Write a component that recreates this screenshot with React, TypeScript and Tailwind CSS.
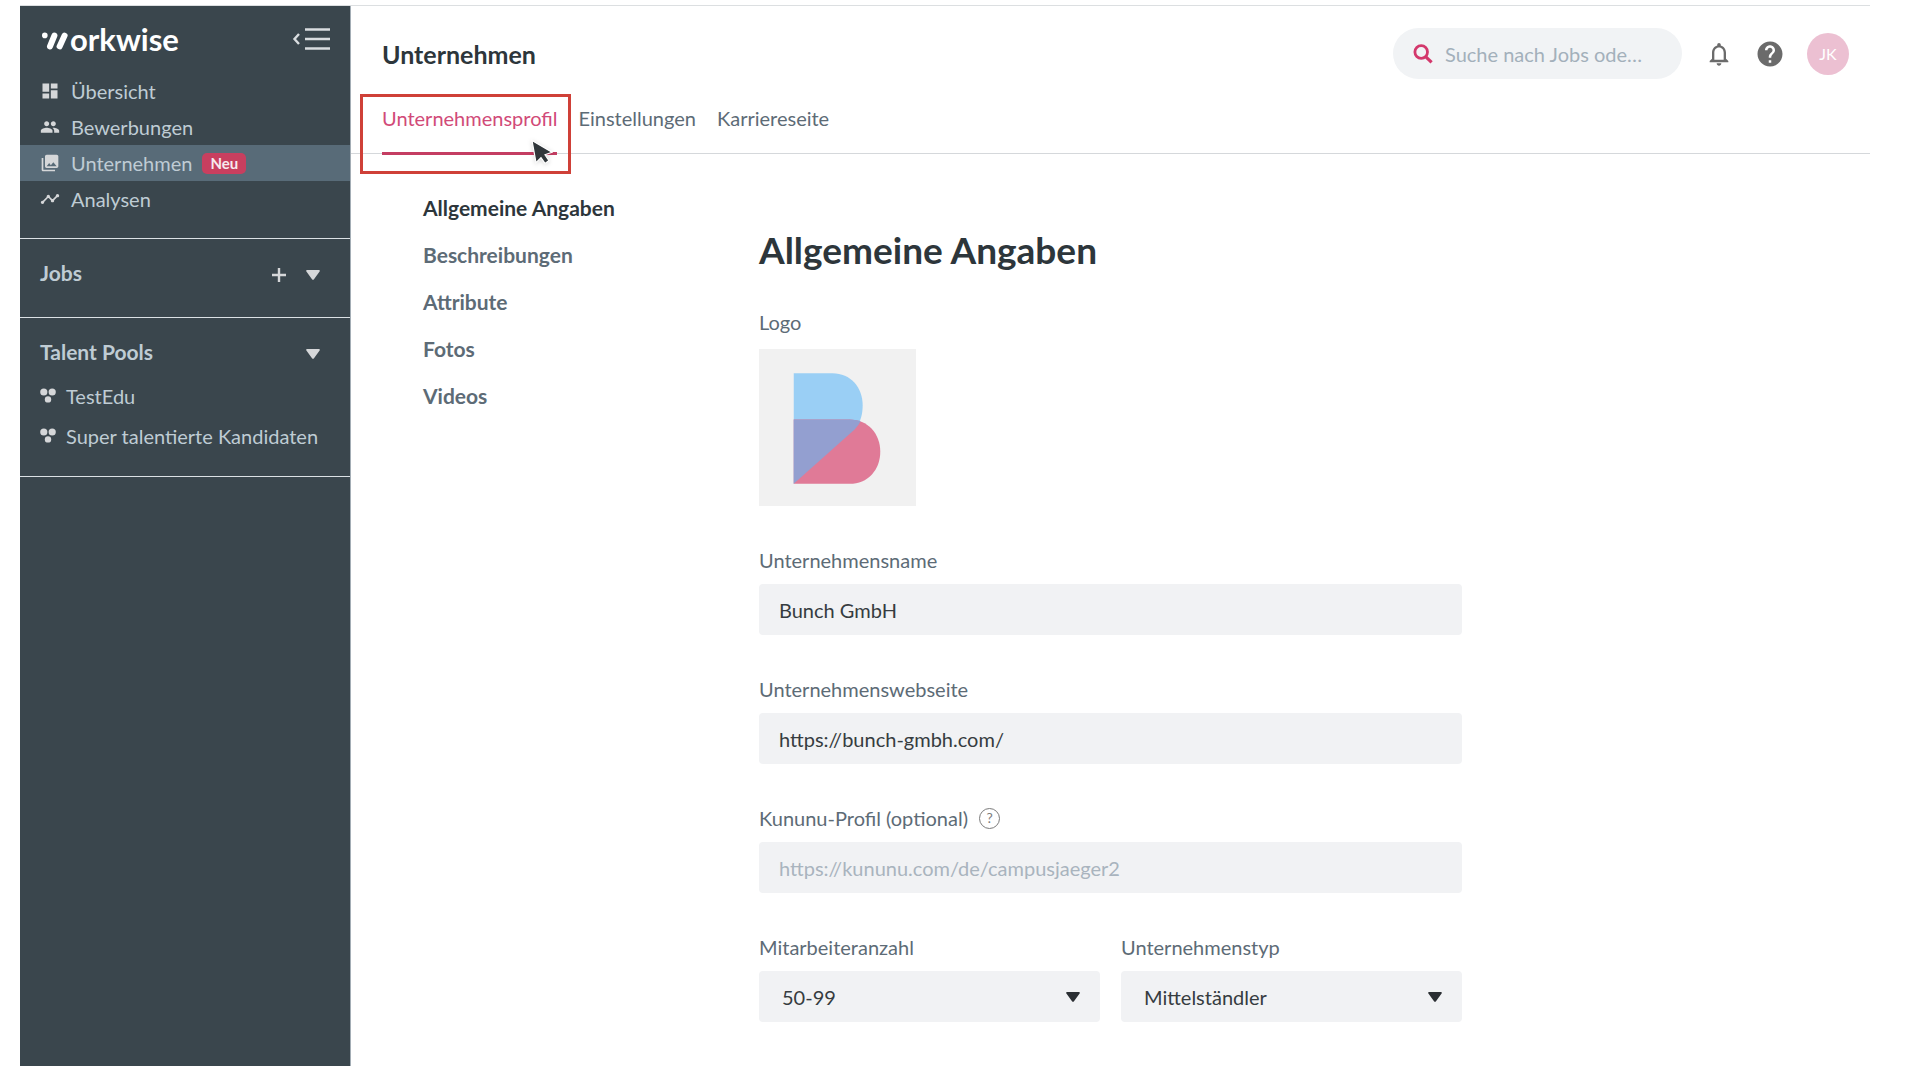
import { ReactNode, useState } from 'react';
import {
  MdDashboard,
  MdHelp,
  MdNotificationsNone,
  MdPeople,
  MdPhotoLibrary,
  MdTimeline,
} from 'react-icons/md';

const navItems = [
  { label: 'Übersicht', icon: MdDashboard },
  { label: 'Bewerbungen', icon: MdPeople },
  { label: 'Unternehmen', icon: MdPhotoLibrary, badge: 'Neu' },
  { label: 'Analysen', icon: MdTimeline },
];

const talentPools = ['TestEdu', 'Super talentierte Kandidaten'];

const tabs = ['Unternehmensprofil', 'Einstellungen', 'Karriereseite'];

const sections = ['Allgemeine Angaben', 'Beschreibungen', 'Attribute', 'Fotos', 'Videos'];

function Caret({ className }: { className?: string }) {
  return (
    <svg viewBox="0 0 14 10" className={`h-[10px] w-[14px] ${className ?? ''}`} fill="currentColor" aria-hidden="true">
      <path d="M1.2 0h11.6c.9 0 1.3.9.8 1.6L8 9.3c-.5.7-1.5.7-2 0L.4 1.6C-.1.9.3 0 1.2 0z" />
    </svg>
  );
}

function PoolIcon() {
  return (
    <svg viewBox="0 0 16 16" className="size-4 shrink-0" fill="#d5d7d9" aria-hidden="true">
      <circle cx="3.8" cy="4" r="3.6" />
      <circle cx="12.2" cy="4" r="3.6" />
      <circle cx="8" cy="11.4" r="3.2" />
    </svg>
  );
}

function Brand() {
  return (
    <a href="#" className="flex items-center text-white" aria-label="workwise">
      <svg viewBox="0 0 28 18" className="mt-1 h-[18px] w-7" aria-hidden="true">
        <circle cx="2.8" cy="3.4" r="2.8" fill="currentColor" />
        <g stroke="currentColor" strokeWidth="6" strokeLinecap="round">
          <path d="M12.4 3.6L8 14.4" />
          <path d="M22.6 3.6L17.6 14.4" />
        </g>
      </svg>
      <span className="text-[31px] leading-9 font-bold">orkwise</span>
    </a>
  );
}

function Sidebar() {
  return (
    <aside className="w-[331px] shrink-0 border-r border-[#a3adb5] bg-[#3a464d] text-xl text-[#bfccd4]">
      <div className="flex items-center justify-between pt-[15px] pr-5 pl-[22px]">
        <Brand />
        <button type="button" aria-label="Menü einklappen">
          <svg viewBox="0 0 38 24" className="h-6 w-[38px]" fill="none" stroke="#d9dde0" aria-hidden="true">
            <path d="M7 7L2.5 12L7 17" strokeWidth="2.4" />
            <path d="M13 2.5h25M13 12h25M13 21.5h25" strokeWidth="2.4" />
          </svg>
        </button>
      </div>

      <nav className="mt-4 border-b border-[#dbe1e5] pb-[21px]">
        {navItems.map(({ label, icon: Icon, badge }) => (
          <a
            key={label}
            href="#"
            className={`flex h-9 items-center pl-5 ${badge ? 'bg-[#586b78]' : ''}`}
          >
            <Icon className="mr-[11px] size-5 text-[#d5d7d9]" />
            {label}
            {badge && (
              <span className="ml-[10px] rounded-[5px] bg-[#c83f5f] px-2 text-[15px] leading-[21px] font-bold text-[#f7e9ed]">
                {badge}
              </span>
            )}
          </a>
        ))}
      </nav>

      <section className="flex h-[79px] items-start justify-between border-b border-[#dbe1e5] pt-5 pr-[30px] pl-5">
        <h2 className="text-[21px] leading-7 font-bold">Jobs</h2>
        <div className="flex h-8 items-center gap-5 text-[#d5d7d9]">
          <button type="button" aria-label="Job hinzufügen">
            <svg viewBox="0 0 14 14" className="size-[14px]" stroke="currentColor" strokeWidth="2.4" aria-hidden="true">
              <path d="M7 0v14M0 7h14" />
            </svg>
          </button>
          <button type="button" aria-label="Jobs anzeigen">
            <Caret />
          </button>
        </div>
      </section>

      <section className="border-b border-[#dbe1e5] pt-5 pb-5 pl-5">
        <div className="flex items-start justify-between pr-[30px]">
          <h2 className="text-[21px] leading-7 font-bold">Talent Pools</h2>
          <button
            type="button"
            aria-label="Talent Pools anzeigen"
            className="flex h-8 items-center text-[#d5d7d9]"
          >
            <Caret />
          </button>
        </div>
        <ul className="mt-[6px]">
          {talentPools.map((pool) => (
            <li key={pool}>
              <a href="#" className="flex h-10 items-center gap-[10px] whitespace-nowrap">
                <PoolIcon />
                {pool}
              </a>
            </li>
          ))}
        </ul>
      </section>
    </aside>
  );
}

function PageHeader() {
  return (
    <header className="border-b border-[#d5d8db] pl-[31px]">
      <div className="flex items-center justify-between pt-[22px] pr-[21px]">
        <h1 className="text-[25px] leading-8 font-bold text-[#2d363b]">Unternehmen</h1>
        <div className="flex items-center">
          <label className="flex h-[51px] w-[289px] items-center gap-3 rounded-full bg-[#f1f3f5] pr-4 pl-5">
            <svg viewBox="0 0 20 20" className="size-5 shrink-0" fill="none" stroke="#d3386c" aria-hidden="true">
              <circle cx="8.200" cy="8" r="6.300" strokeWidth="2.800" />
              <path d="M12.600 12.600L18.600 18.400" strokeWidth="3.200" />
            </svg>
            <input
              type="search"
              aria-label="Suche"
              placeholder="Suche nach Jobs ode…"
              className="w-full min-w-0 bg-transparent text-xl outline-none placeholder:text-[#a3b0bb]"
            />
          </label>
          <button type="button" aria-label="Benachrichtigungen" className="ml-[23px] text-[#6b6b6b]">
            <MdNotificationsNone className="size-7" />
          </button>
          <button type="button" aria-label="Hilfe" className="ml-[22px] text-[#6b6b6b]">
            <MdHelp className="size-[30px]" />
          </button>
          <button
            type="button"
            className="ml-[22px] size-[42px] rounded-full bg-[#ecc0d2] text-base text-white"
          >
            JK
          </button>
        </div>
      </div>

      <nav className="mt-[25px] -mb-[2px] flex gap-[21px] text-xl leading-7 text-[#5d6b76]">
        {tabs.map((tab, i) => (
          <div key={tab} className="relative">
            <a
              href="#"
              className={`block border-b-3 pb-5 ${i === 0 ? 'border-[#c43d62] text-[#d14a78]' : 'border-transparent'}`}
            >
              {tab}
            </a>
            {i === 0 && (
              <>
                <span className="pointer-events-none absolute -top-[10px] -right-[14px] -bottom-[19px] -left-[22px] border-3 border-[#cf4038]" />
                <svg
                  viewBox="0 0 22 26"
                  className="pointer-events-none absolute right-1 -bottom-[10px] h-[26px] w-[22px] drop-shadow-sm"
                  aria-hidden="true"
                >
                  <path
                    d="M1 1.500L5 23.600L10 18.600L14 24.400L18 21.600L14 15.800L21 13.200z"
                    fill="#30363a"
                    stroke="#fff"
                    strokeWidth="1.2"
                  />
                </svg>
              </>
            )}
          </div>
        ))}
      </nav>
    </header>
  );
}

function CompanyLogo() {
  return (
    <div className="size-[157px] bg-[#f1f1f1]">
      <svg viewBox="0 0 156 156" className="size-full" role="img" aria-label="Bunch Logo">
        <path d="M34.5 24H73C91 24 103 38 103 56C103 65 101 73 95 80L34.5 134z" fill="#9acff5" />
        <path d="M34.5 70H90C108 70 120.500 84 120.500 102C120.500 120 108 134 90 134H34.5z" fill="#e07a97" />
        <path d="M34.5 70H90Q96 70 101 71.500Q99 76 95 80L34.5 134z" fill="#939fd0" />
      </svg>
    </div>
  );
}

type FieldProps = {
  id: string;
  label: string;
  hint?: ReactNode;
  children: ReactNode;
};

function Field({ id, label, hint, children }: FieldProps) {
  return (
    <div className="min-w-0 flex-1">
      <div className="mb-[10px] flex h-7 items-center gap-[11px]">
        <label htmlFor={id}>{label}</label>
        {hint}
      </div>
      {children}
    </div>
  );
}

const inputClass =
  'block h-[51px] w-full rounded bg-[#f1f2f4] px-5 text-[#363c40] outline-none placeholder:text-[#a9b4be]';

function SelectBox({ id, options }: { id: string; options: string[] }) {
  const [value, setValue] = useState(options[0]);

  return (
    <div className="relative">
      <select
        id={id}
        value={value}
        onChange={(e) => setValue(e.target.value)}
        className="block h-[51px] w-full appearance-none rounded bg-[#f1f2f4] px-[23px] text-[#363c40] outline-none"
      >
        {options.map((option) => (
          <option key={option}>{option}</option>
        ))}
      </select>
      <Caret className="pointer-events-none absolute top-[21px] right-5 text-[#2b2f33]" />
    </div>
  );
}

export default function App() {
  const [name, setName] = useState('Bunch GmbH');
  const [website, setWebsite] = useState('https://bunch-gmbh.com/');
  const [kununu, setKununu] = useState('');

  return (
    <div className="flex min-h-screen bg-white pt-[5px] pr-[50px] pb-[14px] pl-5 font-['Lato','Liberation_Sans',sans-serif]">
      <div className="flex flex-1 border-t border-[#dcdfe1]">
        <Sidebar />
        <div className="min-w-0 flex-1">
          <PageHeader />

          <div className="flex pl-[72px] text-xl text-[#5d6b76]">
            <nav className="w-[336px] shrink-0 pt-[30px] text-[21px]">
              {sections.map((section, i) => (
                <a
                  key={section}
                  href="#"
                  className={`flex h-[47px] items-center font-bold ${i === 0 ? 'text-[#2d363b]' : ''}`}
                >
                  {section}
                </a>
              ))}
            </nav>

            <main className="w-full max-w-[703px] pt-[72px]">
              <h2 className="text-[37px] leading-[48px] font-bold text-[#2d363b]">Allgemeine Angaben</h2>

              <form className="mt-[34px] flex flex-col gap-10">
                <div className="flex flex-col gap-[13px]">
                  <p className="leading-7">Logo</p>
                  <CompanyLogo />
                </div>

                <Field id="name" label="Unternehmensname">
                  <input id="name" className={inputClass} value={name} onChange={(e) => setName(e.target.value)} />
                </Field>

                <Field id="website" label="Unternehmenswebseite">
                  <input
                    id="website"
                    className={inputClass}
                    value={website}
                    onChange={(e) => setWebsite(e.target.value)}
                  />
                </Field>

                <Field
                  id="kununu"
                  label="Kununu-Profil (optional)"
                  hint={
                    <button
                      type="button"
                      aria-label="Hilfe zum Kununu-Profil"
                      className="flex size-[21px] items-center justify-center rounded-full border border-[#7b7b7b] text-sm text-[#7b7b7b]"
                    >
                      ?
                    </button>
                  }
                >
                  <input
                    id="kununu"
                    className={inputClass}
                    placeholder="https://kununu.com/de/campusjaeger2"
                    value={kununu}
                    onChange={(e) => setKununu(e.target.value)}
                  />
                </Field>

                <div className="flex gap-[21px]">
                  <Field id="size" label="Mitarbeiteranzahl">
                    <SelectBox id="size" options={['50-99']} />
                  </Field>
                  <Field id="type" label="Unternehmenstyp">
                    <SelectBox id="type" options={['Mittelständler']} />
                  </Field>
                </div>
              </form>
            </main>
          </div>
        </div>
      </div>
    </div>
  );
}
